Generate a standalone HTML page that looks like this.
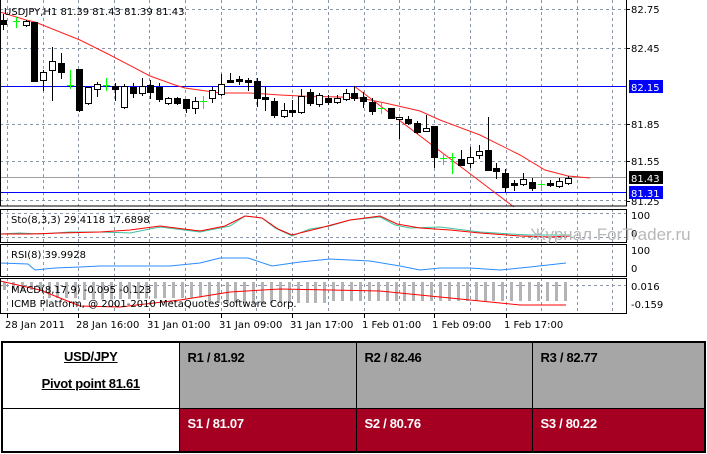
<!DOCTYPE html>
<html><head><meta charset="utf-8"><style>
body{margin:0;width:707px;height:454px;background:#fff;overflow:hidden;position:relative;font-family:"Liberation Sans",sans-serif}
svg{position:absolute;left:0;top:0}
svg text{font-family:"DejaVu Sans","Liberation Sans",sans-serif;font-size:10px}
table{position:absolute;left:1px;top:341px;width:705px;height:112px;border-collapse:collapse;border:2px solid #000;table-layout:fixed}
td{border:1px solid #000;vertical-align:top;font:bold 13px "Liberation Sans",Arial,sans-serif;padding:7px 0 0 8px;letter-spacing:-0.3px}
.g{background:#a6a6a6;color:#000}.r{background:#a50021;color:#fff}
</style></head><body>
<svg id="c" width="707" height="340" viewBox="0 0 707 340" shape-rendering="crispEdges"></svg>
<table>
<colgroup><col style="width:177px"><col style="width:177px"><col style="width:176px"><col></colgroup>
<tr style="height:66px"><td style="text-align:center;padding:6px 0 0 0;background:#fff"><span style="text-decoration:underline">USD/JPY</span><br><span style="display:inline-block;margin-top:12px;text-decoration:underline">Pivot point 81.61</span></td>
<td class="g">R1 / 81.92</td><td class="g">R2 / 82.46</td><td class="g">R3 / 82.77</td></tr>
<tr><td style="background:#fff"></td><td class="r">S1 / 81.07</td><td class="r">S2 / 80.76</td><td class="r">S3 / 80.22</td></tr>
</table>
<script>
var s='';
function L(x1,y1,x2,y2,c,w,d){s+='<line x1="'+x1+'" y1="'+y1+'" x2="'+x2+'" y2="'+y2+'" stroke="'+c+'" stroke-width="'+(w||1)+'"'+(d?' stroke-dasharray="3,3"':'')+'/>';}
function P(pts,c){s+='<polyline fill="none" stroke="'+c+'" stroke-width="1" shape-rendering="auto" points="'+pts+'"/>';}
function T(x,y,t,c,a){s+='<text x="'+x+'" y="'+y+'" fill="'+(c||'#000')+'"'+(a||'')+'>'+t+'</text>';}
var gx=[7,43,78,114,149,185,221,256,292,328,364,399,434,470,506,541,577,612];
[9,48,124,161,200].forEach(function(y){L(0,y+.5,626,y+.5,'#8a96a8',1,1)});
gx.forEach(function(x){L(x+.5,0,x+.5,206,'#8a96a8',1,1)});
[[209,242],[244,276],[278,313]].forEach(function(p){gx.forEach(function(x){L(x+.5,p[0],x+.5,p[1],'#8a96a8',1,1)});});
L(0,237.5,626,237.5,'#8a96a8',1,1);L(0,213.5,626,213.5,'#8a96a8',1,1);L(0,285.5,626,285.5,'#8a96a8',1,1);
L(0,86.5,626,86.5,'#0000ff',1);L(0,177.5,626,177.5,'#a0a0a0',1);L(0,192.5,626,192.5,'#0000ff',1);
for(var x=3;x<600;x+=8.9){var xx=Math.round(x);var b;
 if(xx<75)b=282+ (xx<40?8:16);else if(xx<200)b=300-(xx-75)*0.02;else if(xx<330)b=303;else b=301;
 if(xx>565)break; s+='<rect x="'+xx+'" y="282" width="3" height="'+(b-282)+'" fill="#b4b4b4"/>';}
var C=[[3,20,24,14,29,0],[16,21,22,17,27,2],[26,21,25,20,26,1],[34,22,81,22,81,0],[43,72,80,70,90,1],[52,61,70,47,100,1],[61,63,72,53,78,0],[70,85,86,70,88,2],[79,69,110,69,111,0],[88,87,103,87,104,1],[97,84,89,82,96,1],[106,85,86,78,90,2],[115,86,89,83,100,0],[124,86,107,84,108,1],[133,87,93,83,97,0],[142,86,93,78,95,1],[150,85,92,80,98,0],[159,87,99,83,101,0],[168,98,103,97,104,1],[177,98,103,97,104,0],[186,99,108,99,112,0],[195,101,108,97,113,1],[203,101,102,96,108,2],[212,90,98,87,102,1],[221,84,94,74,95,1],[230,80,82,73,82,0],[239,79,81,76,84,0],[248,80,82,78,90,0],[257,81,98,78,106,0],[265,97,99,87,110,0],[274,101,115,98,117,0],[284,110,116,103,117,1],[292,110,112,100,116,0],[301,96,112,89,113,1],[310,92,103,89,105,0],[319,95,104,93,106,1],[328,98,102,95,104,0],[337,98,102,95,103,1],[346,93,99,89,100,1],[354,93,98,86,100,0],[363,97,101,92,107,0],[372,102,111,98,114,0],[381,108,109,103,113,2],[391,108,118,108,118,0],[399,117,119,117,138,1],[408,119,123,116,124,0],[417,123,132,121,133,0],[426,128,131,115,131,1],[434,126,157,126,167,0],[443,158,159,153,164,2],[452,157,158,153,173,2],[461,159,165,150,165,0],[470,157,163,147,167,1],[479,151,155,145,158,1],[488,150,170,117,170,0],[496,168,171,163,178,0],[505,173,187,169,192,0],[514,183,185,180,190,0],[523,179,184,173,185,1],[532,182,188,178,190,0],[541,184,185,180,190,2],[550,183,185,180,186,0],[559,181,186,178,187,1],[568,178,183,176,184,1]];
P('0,12 26,20 35,22 80,40 110,55 150,76 175,85 185,88 220,93 250,93 280,95 300,96 340,97 360,98 385,103 420,111 440,120 480,135 520,155 545,170 568,176 590,178','#ff2020');
s+='<line x1="354" y1="86" x2="514" y2="207" stroke="#ff2020" shape-rendering="auto"/>';
C.forEach(function(c){var col=c[5]==2?'#00ff00':'#000';L(c[0]+.5,c[3],c[0]+.5,c[4]+1,col,1);
 if(c[5]==2)L(c[0]-3,c[1]+.5,c[0]+4,c[1]+.5,col,1);
 else s+='<rect x="'+(c[0]-2.5)+'" y="'+(c[1]+.5)+'" width="6" height="'+Math.max(c[2]-c[1],1)+'" fill="'+(c[5]?'#fff':'#000')+'" stroke="#000"/>';});
P('0,234 20,233 40,234 70,232 100,232 130,233 160,227 200,232 230,226 245,216 262,218 275,228 292,236 310,229 330,226 350,220 380,217 395,225 410,228 440,227 480,232 510,234 530,235 570,235','#40c0a0');
P('0,234 30,234 60,233 100,232 130,230 160,226 200,231 225,226 245,216 262,218 278,229 292,235 320,228 350,220 380,216 397,224 420,228 450,230 480,233 520,236 550,237 570,236','#ff0000');
P('0,263 28,264 35,270 55,268 80,267 100,266 140,266 170,266 200,263 220,258 248,258 272,266 300,262 330,259 370,261 400,266 420,270 440,268 470,268 500,270 530,267 566,263','#2a8cff');
P('0,281 40,290 80,306 120,307 180,300 230,292 280,289 330,290 380,291 430,296 470,300 520,305 566,305','#ff0000');
s+='<rect x="0.5" y="-1" width="626" height="207" fill="none" stroke="#000"/>';
[[209,242],[244,276],[278,313]].forEach(function(p){s+='<rect x="0.5" y="'+(p[0]+.5)+'" width="626" height="'+(p[1]-p[0])+'" fill="none" stroke="#000"/>'});
T(4,15,'USDJPY,H1  81.39 81.43 81.39 81.43');
T(11,223,'Sto(8,3,3) 29.4118 17.6898');T(11,258,'RSI(8) 39.9928');T(11,293,'MACD(8,17,9) -0.095 -0.123');T(11,307,'ICMB Platform, @ 2001-2010 MetaQuotes Software Corp.');
[[9,'82.75'],[48,'82.45'],[124,'81.85'],[161,'81.55'],[201,'81.25']].forEach(function(a){L(626,a[0]+.5,630,a[0]+.5,'#000');T(631,a[0]+4,a[1])});
s+='<rect x="629" y="80" width="34" height="13" fill="#0000ff"/>';T(631,91,'82.15','#fff');
s+='<rect x="629" y="171" width="34" height="13" fill="#000"/>';T(631,182,'81.43','#fff');
s+='<rect x="629" y="186" width="34" height="13" fill="#0000ff"/>';T(631,197,'81.31','#fff');
T(631,219,'100');T(631,237,'0');T(631,254,'100');T(631,272,'0');T(631,290,'0.016');T(631,308,'-0.159');
T(530,240,'Журнал ForTrader.ru','#b8b8b8',' style="font-size:17px;font-family:Liberation Sans,sans-serif"');
[[7,'28 Jan 2011'],[78,'28 Jan 16:00'],[149,'31 Jan 01:00'],[221,'31 Jan 09:00'],[292,'31 Jan 17:00'],[364,'1 Feb 01:00'],[434,'1 Feb 09:00'],[506,'1 Feb 17:00']].forEach(function(a){L(a[0]+.5,313,a[0]+.5,318,'#000');T(a[0]-2,328,a[1])});
document.getElementById('c').innerHTML=s;
</script>
</body></html>
